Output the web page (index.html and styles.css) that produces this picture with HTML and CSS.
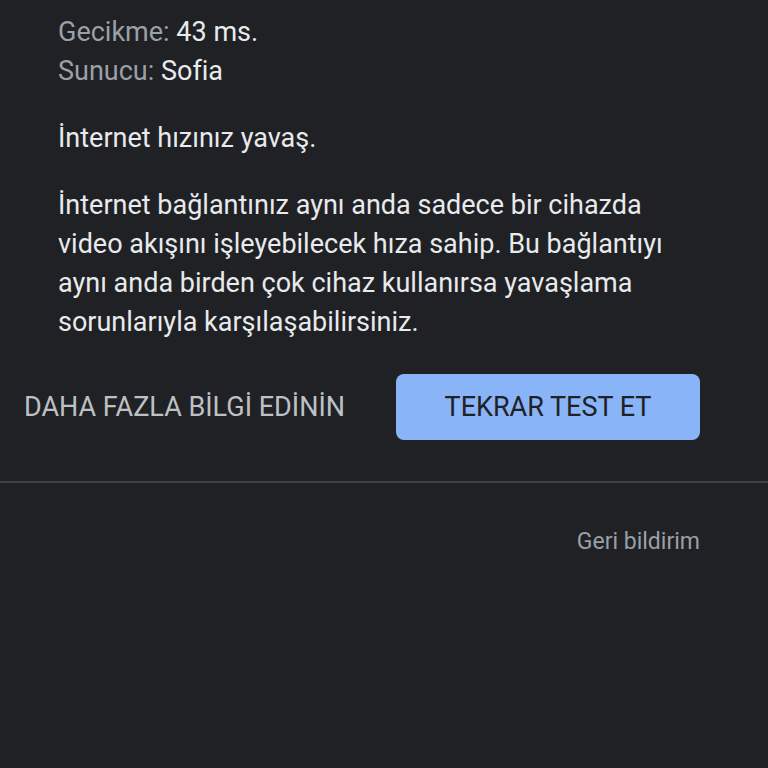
FILE: index.html
```html
<!DOCTYPE html>
<html lang="tr">
<head>
    <meta charset="UTF-8">
    <meta name="viewport" content="width=device-width, initial-scale=1.0">
    <title>Hız testi sonucu</title>
    <link rel="stylesheet" href="styles.css">
</head>
<body>
    <div class="result">
        <!-- Ping and server details -->
        <div class="details">
            <div class="row"><span class="label">Gecikme:</span> 43 ms.</div>
            <div class="row"><span class="label">Sunucu:</span> Sofia</div>
        </div>

        <p class="summary">İnternet hızınız yavaş.</p>

        <p class="explain">İnternet bağlantınız aynı anda sadece bir cihazda video akışını işleyebilecek hıza sahip. Bu bağlantıyı aynı anda birden çok cihaz kullanırsa yavaşlama sorunlarıyla karşılaşabilirsiniz.</p>

        <div class="actions">
            <a class="more" href="#">DAHA FAZLA BİLGİ EDİNİN</a>
            <button type="button" class="retest">TEKRAR TEST ET</button>
        </div>
    </div>

    <div class="footer">
        <a class="feedback" href="#">Geri bildirim</a>
    </div>
</body>
</html>
```

FILE: styles.css
```css
* {
    margin: 0;
    padding: 0;
    box-sizing: border-box;
}

html, body {
    height: 100%;
    background-color: #202124;
}

body {
    font-family: Roboto, "Noto Sans", sans-serif;
    color: #e8eaed;
    font-size: 27px;
}

.result {
    padding: 13px 68px 0 58px;
}

.details .row {
    line-height: 39px;
}

.label {
    color: #9aa0a6;
}

.summary {
    margin-top: 28px;
    line-height: 39px;
}

.explain {
    margin-top: 28px;
    line-height: 39px;
}

.actions {
    display: flex;
    align-items: center;
    justify-content: space-between;
    margin: 32px 0 0 -34px;
    padding-bottom: 41px;
}

.more {
    color: #bdc1c6;
    text-decoration: none;
    font-size: 27px;
}

.retest {
    width: 304px;
    height: 66px;
    border: none;
    border-radius: 8px;
    background-color: #8ab4f8;
    color: #202124;
    font-family: inherit;
    font-size: 27px;
    font-weight: 400;
    cursor: pointer;
}

.footer {
    border-top: 2px solid #3c4043;
    display: flex;
    justify-content: flex-end;
    padding: 45px 68px 0 0;
}

.feedback {
    color: #9aa0a6;
    text-decoration: none;
    font-size: 23px;
}
```
